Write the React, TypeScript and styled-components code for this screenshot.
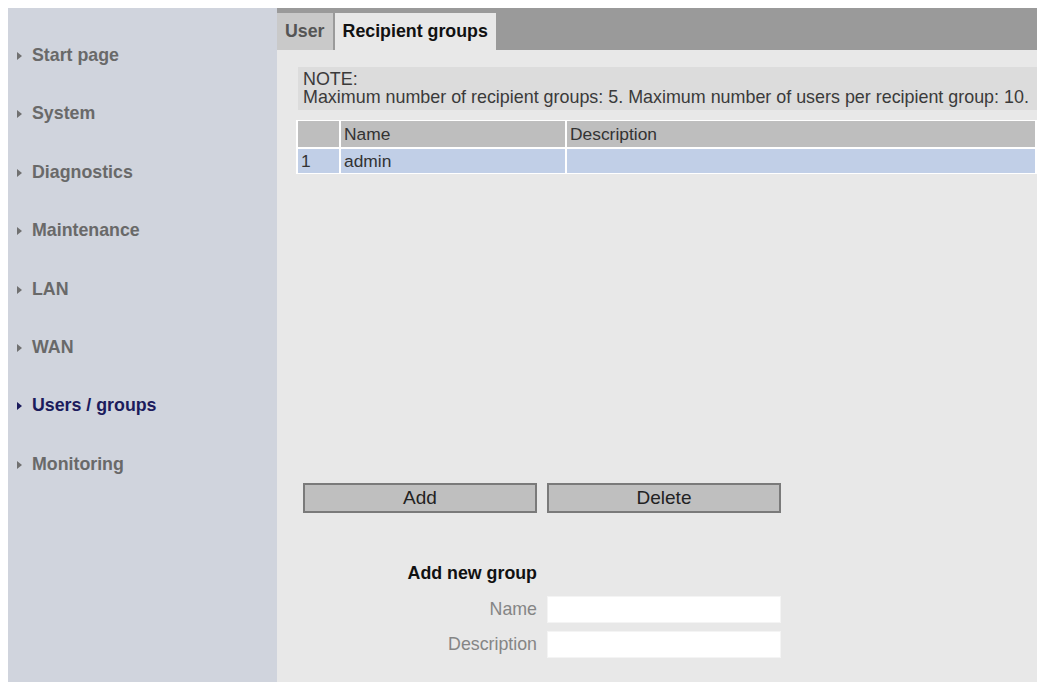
import styled, { createGlobalStyle } from "styled-components";

const GlobalStyle = createGlobalStyle`
  html, body {
    margin: 0;
    background: #ffffff;
    overflow: hidden;
  }
  body {
    padding: 8px 0 0 8px;
    font-family: "Liberation Sans", Arial, sans-serif;
  }
`;

const menuItems = [
  "Start page",
  "System",
  "Diagnostics",
  "Maintenance",
  "LAN",
  "WAN",
  "Users / groups",
  "Monitoring",
];

export default function App() {
  return (
    <>
      <GlobalStyle />
      <Page>
        <SideNav>
          {menuItems.map((item) => (
            <NavItem key={item} active={item === "Users / groups"}>
              <Arrow active={item === "Users / groups"} />
              {item}
            </NavItem>
          ))}
        </SideNav>
        <Main>
          <TabBar>
            <Tab>User</Tab>
            <Tab selected>Recipient groups</Tab>
          </TabBar>
          <Content>
            <Note>
              NOTE:
              <br />
              Maximum number of recipient groups: 5. Maximum number of users per recipient group: 10.
            </Note>
            <GroupTable>
              <thead>
                <tr>
                  <HeadCell width="35px"></HeadCell>
                  <HeadCell width="218px">Name</HeadCell>
                  <HeadCell>Description</HeadCell>
                </tr>
              </thead>
              <tbody>
                <tr>
                  <Cell>1</Cell>
                  <Cell>admin</Cell>
                  <Cell></Cell>
                </tr>
              </tbody>
            </GroupTable>
            <ButtonRow>
              <ActionButton>Add</ActionButton>
              <ActionButton>Delete</ActionButton>
            </ButtonRow>
            <Form>
              <FormTitle>Add new group</FormTitle>
              <span />
              <Label>Name</Label>
              <TextInput type="text" />
              <Label>Description</Label>
              <TextInput type="text" />
            </Form>
          </Content>
        </Main>
      </Page>
    </>
  );
}

const Page = styled.div`
  display: flex;
  min-height: 674px;
`;

const SideNav = styled.nav`
  width: 269px;
  flex-shrink: 0;
  background: #d0d4dd;
  padding-top: 37px;
  display: flex;
  flex-direction: column;
  gap: 37.4px;
`;

const NavItem = styled.div<{ active?: boolean }>`
  display: flex;
  align-items: center;
  gap: 10px;
  padding-left: 9px;
  height: 21px;
  font-size: 17.8px;
  font-weight: bold;
  color: ${(p) => (p.active ? "#1b1b5c" : "#696969")};
`;

const Arrow = styled.span<{ active?: boolean }>`
  width: 0;
  height: 0;
  border-top: 4px solid transparent;
  border-bottom: 4px solid transparent;
  border-left: 5px solid ${(p) => (p.active ? "#1b1b5c" : "#707070")};
  margin-top: 1px;
`;

const Main = styled.main`
  flex: 1;
  background: #e8e8e8;
  display: flex;
  flex-direction: column;
`;

const TabBar = styled.div`
  height: 42px;
  background: #9a9a9a;
  display: flex;
  align-items: flex-end;
  gap: 2px;
`;

const Tab = styled.div<{ selected?: boolean }>`
  height: 37px;
  padding: 0 8px;
  display: flex;
  align-items: center;
  font-size: 17.8px;
  font-weight: bold;
  background: ${(p) => (p.selected ? "#e8e8e8" : "#c9c9c9")};
  color: ${(p) => (p.selected ? "#111111" : "#555555")};
`;

const Content = styled.div`
  padding: 17px 0 0 19px;
  display: flex;
  flex-direction: column;
`;

const Note = styled.div`
  margin-left: 2px;
  background: #dcdcdc;
  padding: 3px 0 4px 5px;
  font-size: 17.9px;
  line-height: 18px;
  color: #3a3a3a;
  white-space: nowrap;
`;

const GroupTable = styled.table`
  margin-top: 10px;
  border-collapse: collapse;
  width: 100%;
  border: 1px solid #ffffff;
  font-size: 17.4px;
  color: #333333;
`;

const HeadCell = styled.th<{ width?: string }>`
  width: ${(p) => p.width || "auto"};
  height: 26px;
  padding: 0 3px;
  text-align: left;
  font-weight: normal;
  background: #bebebe;
  border: 2px solid #ffffff;
  border-top: none;
`;

const Cell = styled.td`
  height: 24px;
  padding: 0 3px;
  background: #c1cfe7;
  border: 2px solid #ffffff;
  border-bottom: none;
`;

const ButtonRow = styled.div`
  margin-top: 309px;
  margin-left: 7px;
  display: grid;
  grid-template-columns: 234px 234px;
  gap: 10px;
`;

const ActionButton = styled.button`
  height: 30px;
  background: #bfbfbf;
  border: 2px solid #7a7a7a;
  font-family: "Liberation Sans", Arial, sans-serif;
  font-size: 19px;
  color: #222222;
  padding: 0;
`;

const Form = styled.div`
  margin-top: 50px;
  margin-left: 7px;
  display: grid;
  grid-template-columns: 234px 234px;
  column-gap: 10px;
  row-gap: 8px;
  align-items: center;
`;

const FormTitle = styled.div`
  text-align: right;
  font-size: 17.8px;
  font-weight: bold;
  color: #111111;
  margin-bottom: 4px;
`;

const Label = styled.div`
  text-align: right;
  font-size: 17.8px;
  color: #858585;
`;

const TextInput = styled.input`
  height: 27px;
  box-sizing: border-box;
  border: 1px solid #f4f4f4;
  background: #ffffff;
  outline: none;
`;
